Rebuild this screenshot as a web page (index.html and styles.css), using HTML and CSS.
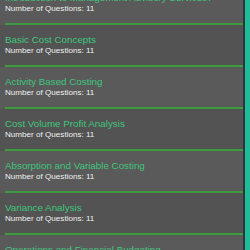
FILE: index.html
```html
<!DOCTYPE html>
<html lang="en">
<head>
  <meta charset="UTF-8">
  <meta name="viewport" content="width=device-width, initial-scale=1.0">
  <title>Topics</title>
  <link rel="stylesheet" href="styles.css">
</head>
<body>
  <div class="screen">
    <ul class="topics">
      <li class="topic">
        <div class="topic-body">
          <h2>Introduction to Management Advisory Services?</h2>
          <p>Number of Questions: 11</p>
        </div>
      </li>
      <li class="topic">
        <div class="topic-body">
          <h2>Basic Cost Concepts</h2>
          <p>Number of Questions: 11</p>
        </div>
      </li>
      <li class="topic">
        <div class="topic-body">
          <h2>Activity Based Costing</h2>
          <p>Number of Questions: 11</p>
        </div>
      </li>
      <li class="topic">
        <div class="topic-body">
          <h2>Cost Volume Profit Analysis</h2>
          <p>Number of Questions: 11</p>
        </div>
      </li>
      <li class="topic">
        <div class="topic-body">
          <h2>Absorption and Variable Costing</h2>
          <p>Number of Questions: 11</p>
        </div>
      </li>
      <li class="topic">
        <div class="topic-body">
          <h2>Variance Analysis</h2>
          <p>Number of Questions: 11</p>
        </div>
      </li>
      <li class="topic">
        <div class="topic-body">
          <h2>Operations and Financial Budgeting</h2>
          <p>Number of Questions: 11</p>
        </div>
      </li>
    </ul>
    <div class="edge"></div>
    <div class="side"></div>
  </div>
</body>
</html>
```

FILE: styles.css
```css
body {
  margin: 0;
  font-family: "Liberation Sans", Arial, sans-serif;
  background-color: #575757;
  overflow: hidden;
}

.screen {
  display: flex;
  height: 250px;
  overflow: hidden;
}

/* list is scrolled a little, first row is cut at the top */
.topics {
  flex: 1;
  list-style: none;
  margin: -17px 0 0 0;
  padding: 0;
}

.topic {
  background-color: #535353;
  padding-left: 5px;
}

.topic:nth-child(odd) {
  background-color: #5a5a5a;
}

.topic-body {
  height: 31px;
  padding-top: 9px;
  border-bottom: 2px solid #3d9a3d;
}

.topic h2 {
  margin: 0;
  font-size: 9.8px;
  line-height: 12px;
  font-weight: normal;
  color: #3fc67d;
  white-space: nowrap;
}

.topic p {
  margin: 0;
  font-size: 8.1px;
  line-height: 10px;
  color: #f0f0f0;
}

.edge {
  width: 2px;
  background-color: #2c3739;
}

.side {
  width: 5px;
  background-color: #22bb9a;
}
```
